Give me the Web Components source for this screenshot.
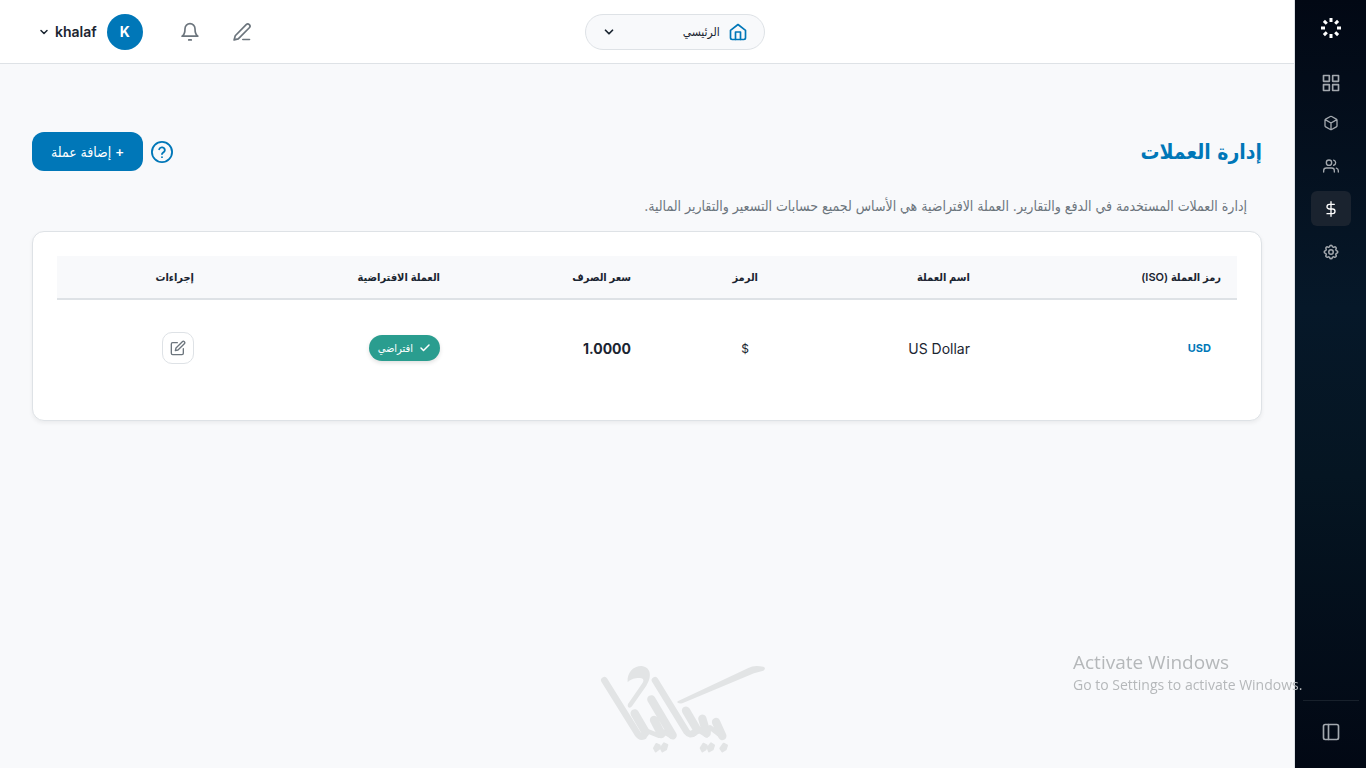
<!DOCTYPE html>
<html lang="ar" dir="rtl">
<head>
<meta charset="utf-8">
<meta name="viewport" content="width=device-width, initial-scale=1">
<title>إدارة العملات</title>
<style>
:root{
  --blue:#0077b8; --ink:#1b2531; --muted:#6c757d; --line:#dee2e6; --soft:#f8f9fb; --green:#2a9d8f;
  --ui:Inter,"DejaVu Sans Condensed","DejaVu Sans",sans-serif;
}
body{margin:0;background:var(--soft);color:var(--ink);font-family:var(--ui);font-size:14px}
</style>
</head>
<body>
<app-shell>
  <side-bar slot="side"></side-bar>
  <top-bar slot="top"></top-bar>
  <page-head>
    <span slot="title">إدارة العملات</span>
    <span slot="action">+ إضافة عملة</span>
    <span slot="note">إدارة العملات المستخدمة في الدفع والتقارير. العملة الافتراضية هي الأساس لجميع حسابات التسعير والتقارير المالية.</span>
  </page-head>
  <currency-table></currency-table>
</app-shell>
<brand-mark></brand-mark>
<activation-notice>
  <span slot="heading">Activate Windows</span>
  <span slot="detail">Go to Settings to activate Windows.</span>
</activation-notice>

<script>
const define = (name, html) => {
  const template = document.createElement('template');
  template.innerHTML = html;
  customElements.define(name, class extends HTMLElement {
    constructor() {
      super();
      this.attachShadow({ mode: 'open' }).append(template.content.cloneNode(true));
    }
  });
};

const icons = {
  loader: '<path d="M12 2v4M12 18v4M2 12h4M18 12h4M4.9 4.9l2.9 2.9M16.2 16.2l2.9 2.9M4.9 19.1l2.9-2.9M16.2 7.8l2.9-2.9"/>',
  grid: '<path d="M3 3h7v7H3zM14 3h7v7h-7zM14 14h7v7h-7zM3 14h7v7H3z"/>',
  box: '<path d="M21 8a2 2 0 0 0-1-1.73l-7-4a2 2 0 0 0-2 0l-7 4A2 2 0 0 0 3 8v8a2 2 0 0 0 1 1.73l7 4a2 2 0 0 0 2 0l7-4A2 2 0 0 0 21 16zM3.3 7l8.7 5 8.7-5M12 22V12"/>',
  users: '<path d="M17 21v-2a4 4 0 0 0-4-4H5a4 4 0 0 0-4 4v2M23 21v-2a4 4 0 0 0-3-3.87M16 3.13a4 4 0 0 1 0 7.75"/><circle cx="9" cy="7" r="4"/>',
  dollar: '<path d="M12 1v22M17 5H9.5a3.5 3.5 0 0 0 0 7h5a3.5 3.5 0 0 1 0 7H6"/>',
  gear: '<path d="M10.3 4.3c.4-1.8 3-1.8 3.4 0a1.7 1.7 0 0 0 2.6 1.1c1.5-.9 3.3.8 2.4 2.4a1.7 1.7 0 0 0 1 2.5c1.8.4 1.8 3 0 3.4a1.7 1.7 0 0 0-1 2.6c.9 1.5-.9 3.3-2.4 2.4a1.7 1.7 0 0 0-2.6 1c-.4 1.8-3 1.8-3.4 0a1.7 1.7 0 0 0-2.5-1c-1.6.9-3.3-.9-2.4-2.4a1.7 1.7 0 0 0-1.1-2.6c-1.8-.4-1.8-3 0-3.4a1.7 1.7 0 0 0 1.1-2.5c-.9-1.6.8-3.3 2.4-2.4 1 .6 2.3.1 2.5-1.1z"/><circle cx="12" cy="12" r="3"/>',
  panel: '<rect x="3" y="3" width="18" height="18" rx="2"/><path d="M9 3v18"/>',
  home: '<path d="M3 10l9-7 9 7v9a2 2 0 0 1-2 2H5a2 2 0 0 1-2-2z"/><path d="M9 21v-9h6v9"/>',
  chevron: '<path d="M6 9l6 6 6-6"/>',
  bell: '<path d="M6 8a6 6 0 0 1 12 0c0 7 3.5 9 3.5 9h-19S6 15 6 8M10.5 21.5h3"/>',
  pen: '<path d="M13 21h8M17 3.2a2.6 2.6 0 0 1 3.8 3.7L7.5 20.2 2.5 21.5l1.4-5z"/>',
  help: '<circle cx="12" cy="12" r="11"/><path d="M8.9 9a3.2 3.2 0 0 1 6.2 1c0 2-3.1 2.8-3.1 4.2M12 17.5v.1"/>',
  check: '<path d="M20 6L9 17l-5-5"/>',
  edit: '<path d="M11 4H4a2 2 0 0 0-2 2v14a2 2 0 0 0 2 2h14a2 2 0 0 0 2-2v-7"/><path d="M18.5 2.5a2.12 2.12 0 0 1 3 3L12 15l-4 1 1-4z"/>'
};
const icon = (name, size, width = 2) =>
  `<svg aria-hidden="true" width="${size}" height="${size}" viewBox="0 0 24 24" fill="none" stroke="currentColor" stroke-width="${width}" stroke-linecap="${name === 'loader' ? 'butt' : 'round'}" stroke-linejoin="round">${icons[name]}</svg>`;

define('app-shell', `
<style>
:host{display:flex;min-height:100vh}
.body{flex:1;min-width:0;display:flex;flex-direction:column}
main{padding:68px 32px 32px}
</style>
<slot name="side"></slot>
<div class="body"><slot name="top"></slot><main><slot></slot></main></div>`);

define('side-bar', `
<style>
:host{display:flex;flex-direction:column;align-items:center;box-sizing:border-box;width:72px;flex:none;
  border-inline-end:1px solid var(--line);color:#a3a8ae;
  background:linear-gradient(180deg,#020814 0%,#061829 40%,#051522 62%,#020814 100%)}
a,button{display:flex;align-items:center;justify-content:center;width:40px;height:35px;border-radius:6px;color:inherit;
  background:none;border:0;padding:0}
svg{display:block}
.brand{height:56px;color:#fff}
nav{display:flex;flex-direction:column;gap:8px;margin-top:5px}
.first{margin-top:9px}
.active{background:#1a232f;color:#fff}
footer{margin-top:auto;margin-bottom:5px;width:56px;height:62px;border-top:1px solid #18212c;display:flex;align-items:center;justify-content:center}
</style>
<a class="brand" href="#" aria-label="Logo">${icon('loader', 24, 3)}</a>
<a class="first" href="#" aria-label="لوحة التحكم">${icon('grid', 20, 2)}</a>
<nav>
  <a href="#" aria-label="المنتجات">${icon('box', 16, 2)}</a>
  <a href="#" aria-label="المستخدمون">${icon('users', 16, 2)}</a>
  <a class="active" href="#" aria-label="العملات">${icon('dollar', 16, 2)}</a>
  <a href="#" aria-label="الإعدادات">${icon('gear', 18, 2)}</a>
</nav>
<footer><button type="button" aria-label="طي القائمة">${icon('panel', 20, 2)}</button></footer>`);

define('top-bar', `
<style>
:host{display:flex;align-items:center;justify-content:space-between;height:63px;padding:0 32px;
  background:#fff;border-bottom:1px solid var(--line)}
:host::before{content:"";width:174px}
svg{display:block;flex:none}
.branch{display:flex;align-items:center;gap:8px;box-sizing:border-box;width:180px;height:36px;padding:0 16px;
  border:1px solid var(--line);border-radius:18px;background:var(--soft);color:var(--blue)}
select{appearance:none;flex:1;min-width:0;border:0;padding:0;background:none;color:var(--ink);font:12px var(--ui);height:24px}
.branch svg:last-child{color:var(--ink)}
.tools{display:flex;align-items:center}
button{border:0;background:none;padding:0;color:var(--muted);display:flex;align-items:center;justify-content:center;height:40px;font:inherit}
.icon{width:40px;margin-inline-end:12px}
.user{gap:10px;color:var(--ink);font:600 14px Inter,sans-serif;margin-inline-start:15px;padding-inline-end:6px}
.user svg{margin-inline-start:-5px}
.avatar{width:36px;height:36px;border-radius:50%;background:var(--blue);color:#fff;display:flex;align-items:center;justify-content:center;font-weight:700}
</style>
<div class="branch">${icon('home', 20, 2)}
  <select aria-label="الفرع"><option>الرئيسي</option></select>
  ${icon('chevron', 14, 3)}
</div>
<div class="tools">
  <button class="icon" type="button" aria-label="ملاحظة">${icon('pen', 20, 2)}</button>
  <button class="icon" type="button" aria-label="التنبيهات">${icon('bell', 20, 2)}</button>
  <button class="user" type="button"><span class="avatar">K</span><span>khalaf</span>${icon('chevron', 12, 3)}</button>
</div>`);

define('page-head', `
<style>
:host{display:block}
.row{display:flex;align-items:center;gap:8px;height:39px}
h1{margin:0;margin-inline-end:auto;font:700 21px/32px "DejaVu Sans Condensed","DejaVu Sans",sans-serif;color:var(--blue)}
button{border:0;padding:0}
.help{background:none;color:var(--blue);width:22px;height:22px}
.help svg{display:block}
.add{background:var(--blue);color:#fff;border-radius:12px;height:39px;padding:0 19px;font:500 14px var(--ui)}
p{margin:0;padding:24px 15px 14px;font-size:14px;line-height:22px;color:var(--muted)}
</style>
<div class="row">
  <h1><slot name="title"></slot></h1>
  <button class="help" type="button" aria-label="مساعدة">${icon('help', 22, 2)}</button>
  <button class="add" type="button"><slot name="action"></slot></button>
</div>
<p><slot name="note"></slot></p>`);

define('currency-table', `
<style>
:host{display:block;background:#fff;border:1px solid var(--line);border-radius:12px;padding:24px;box-shadow:0 2px 4px rgba(0,0,0,.06)}
table{width:100%;table-layout:fixed;border-collapse:separate;border-spacing:0;text-align:start}
th{height:44px;padding:0 16px;background:var(--soft);border-bottom:2px solid var(--line);font:600 11px var(--ui);text-align:start;box-sizing:border-box;white-space:nowrap}
td{height:96px;padding:0 16px}
.code{color:var(--blue);font-weight:700;font-size:11px;padding-inline-start:26px}
.symbol{padding-inline-start:25px;font-size:12px}
.rate{font-weight:700}
.badge{display:inline-flex;align-items:center;gap:6px;box-sizing:border-box;height:26px;padding:0 9px;border-radius:13px;background:var(--green);color:#fff;font-size:11px;box-shadow:0 2px 4px rgba(0,0,0,.12);vertical-align:middle}
button{display:flex;align-items:center;justify-content:center;width:32px;height:32px;padding:0;border:1px solid var(--line);border-radius:10px;background:#fff;color:var(--muted)}
</style>
<table>
  <colgroup><col style="width:251px"><col style="width:212px"><col style="width:127px"><col style="width:191px"><col style="width:246px"><col style="width:153px"></colgroup>
  <thead><tr><th>رمز العملة (ISO)</th><th>اسم العملة</th><th>الرمز</th><th>سعر الصرف</th><th>العملة الافتراضية</th><th>إجراءات</th></tr></thead>
  <tbody><tr>
    <td class="code">USD</td><td>US Dollar</td><td class="symbol">$</td><td class="rate">1.0000</td>
    <td><span class="badge">${icon('check', 12, 3)}<span>افتراضي</span></span></td>
    <td><button type="button" aria-label="تعديل">${icon('edit', 16, 2)}</button></td>
  </tr></tbody>
</table>`);

define('brand-mark', `
<style>
:host{position:fixed;left:0;right:0;bottom:0;display:flex;justify-content:center;pointer-events:none}
svg{display:block}
</style>
<svg role="img" aria-label="Logo" width="194" height="118" viewBox="-12 0 582 354" fill="none" stroke="#e2e4e5" stroke-linecap="round" stroke-linejoin="round">
  <g stroke-width="20">
    <path d="M43 91L142 250Q150 262 160 259"/>
    <path d="M195 91L290 245Q300 258 312 248"/>
  </g>
  <g stroke-width="25">
    <path d="M134 190L166 245M192 210L214 252M184 148L248 256M288 182L322 240M337 206L350 250M378 216L397 258"/>
  </g>
  <path stroke-width="14" d="M150 258Q164 266 174 244L206 257Q220 258 222 245L246 260M296 250Q310 262 324 240L350 256L360 232L396 260"/>
  <path fill="#e2e4e5" stroke="none" d="M113 97C110 68 130 48 154 48C181 50 188 77 169 107L126 169C120 177 110 172 114 162L158 98C166 85 151 82 138 85C126 87 119 90 113 97z"/>
  <path fill="#e2e4e5" stroke="none" d="M263 154L475 54Q492 44 520 50Q530 54 520 62L492 70L277 160Q258 161 263 154z"/>
  <path fill="#e2e4e5" stroke-width="6" d="M199 282L209 286 207 297 197 304 192 295zM222 280L232 285 228 298 217 304 212 294zM340 281L350 286 347 298 337 304 332 294zM363 280L372 286 368 298 357 304 353 293zM401 281L411 286 407 298 397 304 391 295z"/>
</svg>`);

define('activation-notice', `
<style>
:host{position:fixed;right:57px;bottom:73px;display:block;direction:ltr;width:236px;color:#b5b8ba;font-family:"Open Sans","Noto Sans",sans-serif;white-space:nowrap;pointer-events:none}
div{font-size:19px;line-height:26px}
p{margin:0;font-size:14px;line-height:20px}
</style>
<div><slot name="heading"></slot></div>
<p><slot name="detail"></slot></p>`);
</script>
</body>
</html>
